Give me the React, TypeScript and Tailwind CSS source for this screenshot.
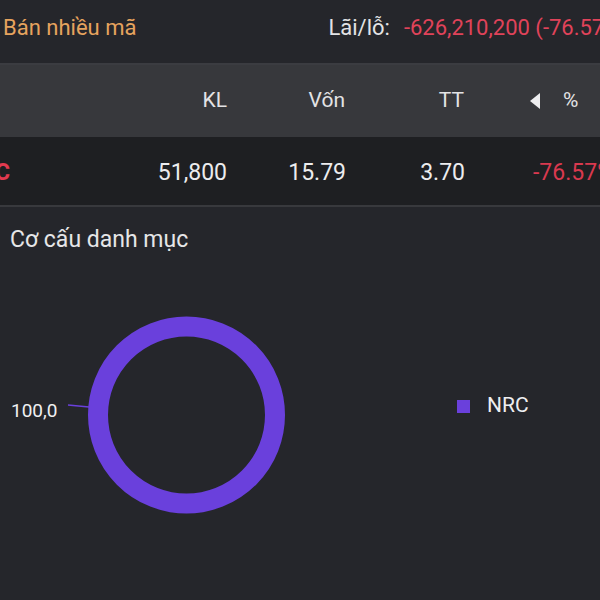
export default function App() {
  return (
    <div
      className="w-[600px] h-[600px] overflow-hidden bg-[#25262b] text-[#e6e6e8]"
      style={{ fontFamily: 'Roboto, "Noto Sans", sans-serif' }}
    >
      {/* Top summary bar */}
      <div className="h-[63px] pb-[8px] flex items-center whitespace-nowrap bg-[#25262b] text-[22px]">
        <span className="shrink-0 pl-[3px] text-[#e6a35e]">Bán nhiều mã</span>
        <span className="shrink-0 ml-[192px] text-[#e3e3e5]">Lãi/lỗ:</span>
        <span className="shrink-0 ml-[14px] text-[#e0435a]">-626,210,200 (-76.57%)</span>
      </div>
      <div className="h-[2px] bg-[#3b3c41]" />

      {/* Table header */}
      <div className="h-[72px] flex items-center whitespace-nowrap bg-[#37383c] text-[21px] text-[#e3e3e5]">
        <div className="shrink-0 w-[227px] text-right">KL</div>
        <div className="shrink-0 w-[118px] text-right">Vốn</div>
        <div className="shrink-0 w-[119px] text-right">TT</div>
        <svg className="shrink-0 ml-[66px] w-[10px] h-[16px]" viewBox="0 0 10 16">
          <path d="M10 0 L10 16 L0 8 Z" fill="#ededef" />
        </svg>
        <div className="shrink-0 ml-[23px]">%</div>
      </div>

      {/* Data row */}
      <div className="h-[68px] pt-[5px] flex items-center whitespace-nowrap bg-[#1e1f22] text-[23px] text-[#ececee]">
        <div className="shrink-0 w-[120px] overflow-hidden">
          <span className="block -ml-[36px] font-bold text-[#e23a50]">NRC</span>
        </div>
        <div className="shrink-0 w-[107px] text-right">51,800</div>
        <div className="shrink-0 w-[119px] text-right">15.79</div>
        <div className="shrink-0 w-[119px] text-right">3.70</div>
        <div className="shrink-0 ml-[68px] text-[#d9394f]">-76.57%</div>
      </div>
      <div className="h-[2px] bg-[#38393d]" />

      {/* Portfolio structure */}
      <div className="bg-[#25262b]">
        <div className="pl-[10px] pt-[18px] h-[47px] text-[23px] leading-[30px] text-[#e6e6e8]">
          Cơ cấu danh mục
        </div>
        <div className="flex">
          <svg className="shrink-0" width="457" height="290" viewBox="0 0 457 290">
            <circle cx="186.5" cy="161" r="88.5" fill="none" stroke="#6a40dc" strokeWidth="20" />
            <line x1="68" y1="151" x2="89" y2="153" stroke="#6a40dc" strokeWidth="1.5" />
            <text x="11" y="163" fill="#f0f0f2" fontSize="19" fontFamily="Roboto, sans-serif">
              100,0
            </text>
          </svg>
          <div className="mt-[145px] h-[14px] flex items-center gap-[17px]">
            <div className="shrink-0 w-[13px] h-[13px] bg-[#6a40dc]" />
            <span className="text-[21px] text-[#eeeef0]">NRC</span>
          </div>
        </div>
      </div>
    </div>
  );
}
